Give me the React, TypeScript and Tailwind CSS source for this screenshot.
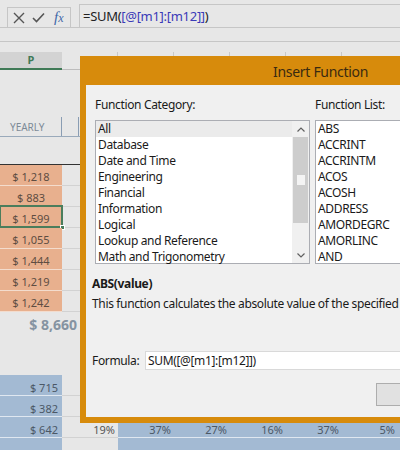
import React from 'react'

const tan = ['$ 1,218', '$ 883', '$ 1,599', '$ 1,055', '$ 1,444', '$ 1,219', '$ 1,242']
const categories = [
  'All',
  'Database',
  'Date and Time',
  'Engineering',
  'Financial',
  'Information',
  'Logical',
  'Lookup and Reference',
  'Math and Trigonometry',
]
const functions = ['ABS', 'ACCRINT', 'ACCRINTM', 'ACOS', 'ACOSH', 'ADDRESS', 'AMORDEGRC', 'AMORLINC', 'AND']
const pcts = ['37%', '27%', '16%', '37%', '5%']

function FormulaBar() {
  return (
    <div className="h-[28px] flex items-start border-b border-[#c6c6c6]">
      <div className="ml-[7px] mt-[7px] w-[64px] h-[20px] border border-[#c6c6c6] border-b-0 flex items-center gap-[7px] pl-[5px] text-[#555]">
        <svg width="12" height="12" viewBox="0 0 12 12" className="stroke-[#555]" strokeWidth="1.4">
          <path d="M1 1 L11 11 M11 1 L1 11" />
        </svg>
        <svg width="13" height="11" viewBox="0 0 13 11" fill="none" className="stroke-[#555]" strokeWidth="1.6">
          <path d="M1 6 L4.5 9.5 L12 1.5" />
        </svg>
        <span className="ml-[2px] text-[15px] italic text-[#3f67a8] font-['Liberation_Serif',serif] leading-none">
          f<span className="text-[12px]">x</span>
        </span>
      </div>
      <div className="ml-[8px] mt-[4px] flex-1 h-[24px] border-l border-t border-[#c6c6c6] pl-[3px] text-[13px] tracking-[-0.3px] leading-[23px] text-[#222] whitespace-nowrap">
        =SUM(<span className="text-[#3a3ab8]">[@[m1]:[m12]]</span>)
      </div>
    </div>
  )
}

function Sheet() {
  return (
    <div>
      <div className="h-[14px] border-b border-[#c6c6c6]" />
      {/* column headers */}
      <div className="flex h-[28px]">
        <div className="w-[62px] pt-[10px]">
          <div className="h-[18px] bg-[#d3d3d3] border-b-2 border-[#3f7a56] text-center text-[11px] font-bold leading-[16px] text-[#3f7a56]">
            P
          </div>
        </div>
        <div className="w-[55px] pt-[10px]">
          <div className="h-[18px] border-b border-[#bdbdbd]" />
        </div>
        {[0, 1, 2, 3, 4].map((i) => (
          <div key={i} className="w-[56px] pt-[10px]">
            <div className="h-[18px] border-l border-[#c9c9c9]" />
          </div>
        ))}
      </div>
      <div className="h-[47px]" />
      {/* yearly header */}
      <div className="flex h-[20px] border-b border-[#9aaabb]">
        <div className="w-[62px] border-r border-[#8a9db3] pl-[10px] text-[10px] leading-[21px] text-[#7d8a97]">
          YEARLY
        </div>
        <div className="w-[17px] border-r border-[#8a9db3]" />
      </div>
      <div className="h-[28px] border-b border-[#333]" />
      {tan.map((v, i) => (
        <div key={v} className="flex h-[21px]">
          <div className="relative w-[62px] bg-[#e8b08e] border-b border-[#f3dccd] text-center pt-[2px] text-[11px] leading-[20px] text-[#5e4d42]">
            {v}
            {i === 2 && (
              <div className="absolute left-[-1px] top-[-2px] w-[64px] h-[23px] border-2 border-[#4a7d5c]">
                <div className="absolute right-[-4px] bottom-[-4px] w-[5px] h-[5px] bg-[#4a7d5c] border border-white" />
              </div>
            )}
          </div>
          <div className="w-[56px] border-b border-[#d2d2d2]" />
        </div>
      ))}
      <div className="flex h-[24px]">
        <div className="w-[77px] text-right text-[14px] font-bold leading-[26px] text-[#8593a1]">$ 8,660</div>
      </div>
      <div className="h-[39px]" />
      {['$ 715', '$ 382', '$ 642', ''].map((v, i) => (
        <div key={i} className="flex h-[21px]">
          <div className="w-[62px] bg-[#a3bad3] border-b border-[#dfe7f0] text-right pr-[4px] pt-[4px] text-[11px] leading-[18px] text-[#4b5866]">
            {v}
          </div>
          <div className="w-[56px] border-b border-[#d2d2d2] text-right pr-[3px] pt-[4px] text-[11px] leading-[18px] text-[#555]">
            {i === 2 ? '19%' : ''}
          </div>
          {[0, 1, 2, 3, 4].map((j) => (
            <div
              key={j}
              className="w-[56px] bg-[#a3bad3] border-b border-[#dfe7f0] text-right pr-[3px] pt-[4px] text-[11px] leading-[18px] text-[#4b5866]"
            >
              {i === 2 ? pcts[j] : ''}
            </div>
          ))}
          <div className="flex-1 bg-[#a3bad3] border-b border-[#dfe7f0]" />
        </div>
      ))}
    </div>
  )
}

function Dialog() {
  return (
    <div className="absolute left-[80px] top-[56px] w-[340px] h-[367px] bg-[#d78b0c] px-[6px] pb-[6px] flex flex-col">
      <div className="h-[29px] shrink-0 pl-[187px] text-[14px] tracking-[-0.3px] leading-[32px] text-[#3a2a10]">
        Insert Function
      </div>
      <div className="flex-1 bg-[#f0f0f0] pl-[9px] text-[12px] tracking-[-0.35px] text-[#1a1a1a]">
        <div className="flex pt-[12px] h-[35px] leading-[16px]">
          <div className="w-[220px]">Function Category:</div>
          <div>Function List:</div>
        </div>
        <div className="flex gap-[5px] h-[144px]">
          <div className="w-[215px] border border-[#abadb3] bg-white flex">
            <div className="flex-1">
              {categories.map((c, i) => (
                <div key={c} className={`h-[16px] leading-[16px] pl-[2px] ${i === 0 ? 'bg-[#ebebeb]' : ''}`}>
                  {c}
                </div>
              ))}
            </div>
            <div className="w-[17px] flex flex-col bg-[#f0f0f0]">
              <div className="h-[16px] flex items-center justify-center">
                <svg width="8" height="5" viewBox="0 0 8 5" fill="none" className="stroke-[#606060]" strokeWidth="1.2">
                  <path d="M0.5 4.5 L4 1 L7.5 4.5" />
                </svg>
              </div>
              <div className="h-[86px] mx-[1px] bg-[#cdcdcd] flex items-center justify-center">
                <div className="w-[8px] h-[10px] bg-[#f4f4f4]" />
              </div>
              <div className="flex-1" />
              <div className="h-[16px] flex items-center justify-center">
                <svg width="8" height="5" viewBox="0 0 8 5" fill="none" className="stroke-[#606060]" strokeWidth="1.2">
                  <path d="M0.5 0.5 L4 4 L7.5 0.5" />
                </svg>
              </div>
            </div>
          </div>
          <div className="flex-1 border border-[#abadb3] bg-white">
            {functions.map((f) => (
              <div key={f} className="h-[16px] leading-[16px] pl-[2px]">
                {f}
              </div>
            ))}
          </div>
        </div>
        <div className="-ml-[3px] mt-[11px] font-bold leading-[18px]">ABS(value)</div>
        <div className="-ml-[3px] mt-[2px] leading-[18px] whitespace-nowrap">
          This function calculates the absolute value of the specified
        </div>
        <div className="-ml-[3px] mt-[38px] flex items-center h-[19px]">
          <div className="w-[53px]">Formula:</div>
          <div className="flex-1 h-[19px] bg-white border border-[#d9d9d9] pl-[2px] leading-[17px] whitespace-nowrap">
            SUM([@[m1]:[m12]])
          </div>
        </div>
        <div className="flex mt-[13px]">
          <div className="ml-[281px] w-[80px] h-[23px] bg-[#e1e1e1] border border-[#adadad]" />
        </div>
      </div>
    </div>
  )
}

export default function App() {
  return (
    <div className="relative w-[400px] h-[450px] overflow-hidden bg-[#e7e7e7] font-['Segoe_UI','Noto_Sans',sans-serif]">
      <FormulaBar />
      <Sheet />
      <Dialog />
    </div>
  )
}
